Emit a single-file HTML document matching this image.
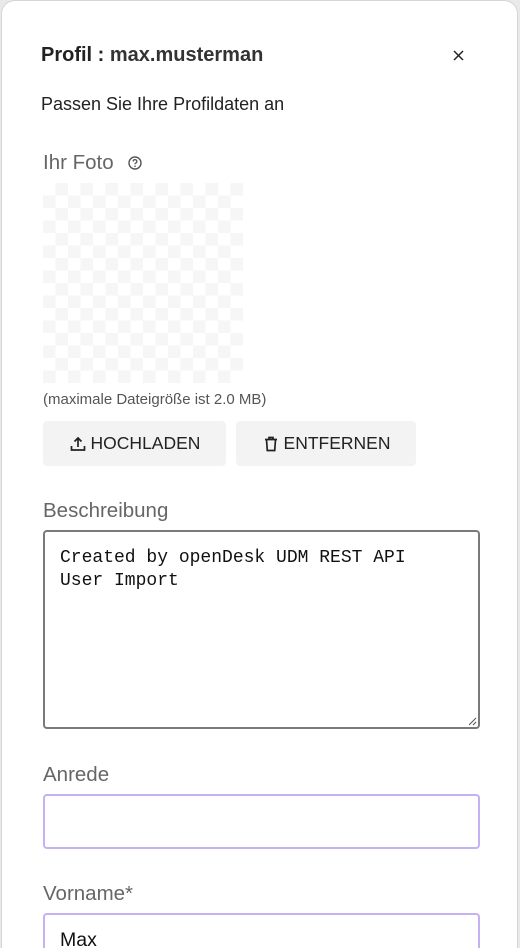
<!DOCTYPE html>
<html><head><meta charset="utf-8"><style>
html,body{margin:0;padding:0;width:520px;height:948px;overflow:hidden;background:#e9e9e9;}
body{font-family:"Liberation Sans",sans-serif;position:relative;}
.card{position:absolute;left:1px;top:0;width:517px;height:960px;background:#fff;border-radius:14px 14px 0 0;border:1px solid #d6d6d6;box-sizing:border-box;}
.t{position:absolute;white-space:nowrap;}
.lbl{color:#666;font-size:20.5px;}
.chk{position:absolute;left:43px;top:183px;width:200px;height:200px;
background-color:#fff;background-image:linear-gradient(45deg,#f6f6f6 25%,transparent 25%,transparent 75%,#f6f6f6 75%),linear-gradient(45deg,#f6f6f6 25%,transparent 25%,transparent 75%,#f6f6f6 75%);
background-size:25px 25px;background-position:0 0,12.5px 12.5px;}
.btn{position:absolute;top:421px;height:45px;background:#f3f3f3;border-radius:4px;font-size:17.5px;color:#222;display:flex;align-items:center;justify-content:center;gap:4px;}
.box{position:absolute;left:43px;width:437px;box-sizing:border-box;border-radius:4px;}
</style></head><body>
<div class="card"></div>
<div class="t" style="left:41px;top:44px;font-size:20px;font-weight:bold;color:#222;">Profil : <span style="color:#333">max.musterman</span></div>
<svg style="position:absolute;left:453px;top:50px" width="11" height="11" viewBox="0 0 11 11"><path d="M1 1L10 10M10 1L1 10" stroke="#222" stroke-width="1.5"/></svg>
<div class="t" style="left:41px;top:94px;font-size:18px;color:#222;">Passen Sie Ihre Profildaten an</div>
<div class="t lbl" style="left:43px;top:151px;">Ihr Foto</div>
<svg style="position:absolute;left:127px;top:155px" width="16" height="16" viewBox="0 0 16 16"><circle cx="8" cy="8" r="6" fill="none" stroke="#555" stroke-width="1.4"/><path d="M6.2 6.5a1.8 1.8 0 1 1 2.5 1.6c-.5.3-.7.6-.7 1.2" fill="none" stroke="#555" stroke-width="1.3"/><circle cx="8" cy="11.2" r=".8" fill="#555"/></svg>
<div class="chk"></div>
<div class="t" style="left:43px;top:391px;font-size:15px;color:#555;">(maximale Dateigröße ist 2.0 MB)</div>
<div class="btn" style="left:43px;width:183px;"><svg width="18" height="18" viewBox="0 0 18 18"><path d="M9 12V3M5.5 6.5L9 3l3.5 3.5M2.5 11v4h13v-4" fill="none" stroke="#222" stroke-width="1.7"/></svg>HOCHLADEN</div>
<div class="btn" style="left:236px;width:180px;"><svg width="18" height="18" viewBox="0 0 18 18"><path d="M3 4.5h12M7 4.5V2.5h4v2M4.5 4.5l.8 11h7.4l.8-11" fill="none" stroke="#222" stroke-width="1.7"/></svg>ENTFERNEN</div>
<div class="t lbl" style="left:43px;top:499px;">Beschreibung</div>
<div class="box" style="top:530px;height:199px;border:2px solid #7a7a7a;"></div>
<div class="t" style="left:60px;top:547px;font-family:'Liberation Mono',monospace;font-size:18px;line-height:23px;color:#111;">Created by openDesk UDM REST API<br>User Import</div>
<svg style="position:absolute;left:467px;top:716px" width="10" height="10"><path d="M2 9L9 2M6 9L9 6" stroke="#555" stroke-width="1"/></svg>
<div class="t lbl" style="left:43px;top:763px;">Anrede</div>
<div class="box" style="top:794px;height:55px;border:2px solid #c6b1f5;"></div>
<div class="t lbl" style="left:43px;top:882px;">Vorname*</div>
<div class="box" style="top:913px;height:55px;border:2px solid #c6b1f5;"></div>
<div class="t" style="left:60px;top:929px;font-size:19.5px;color:#111;">Max</div>
</body></html>
